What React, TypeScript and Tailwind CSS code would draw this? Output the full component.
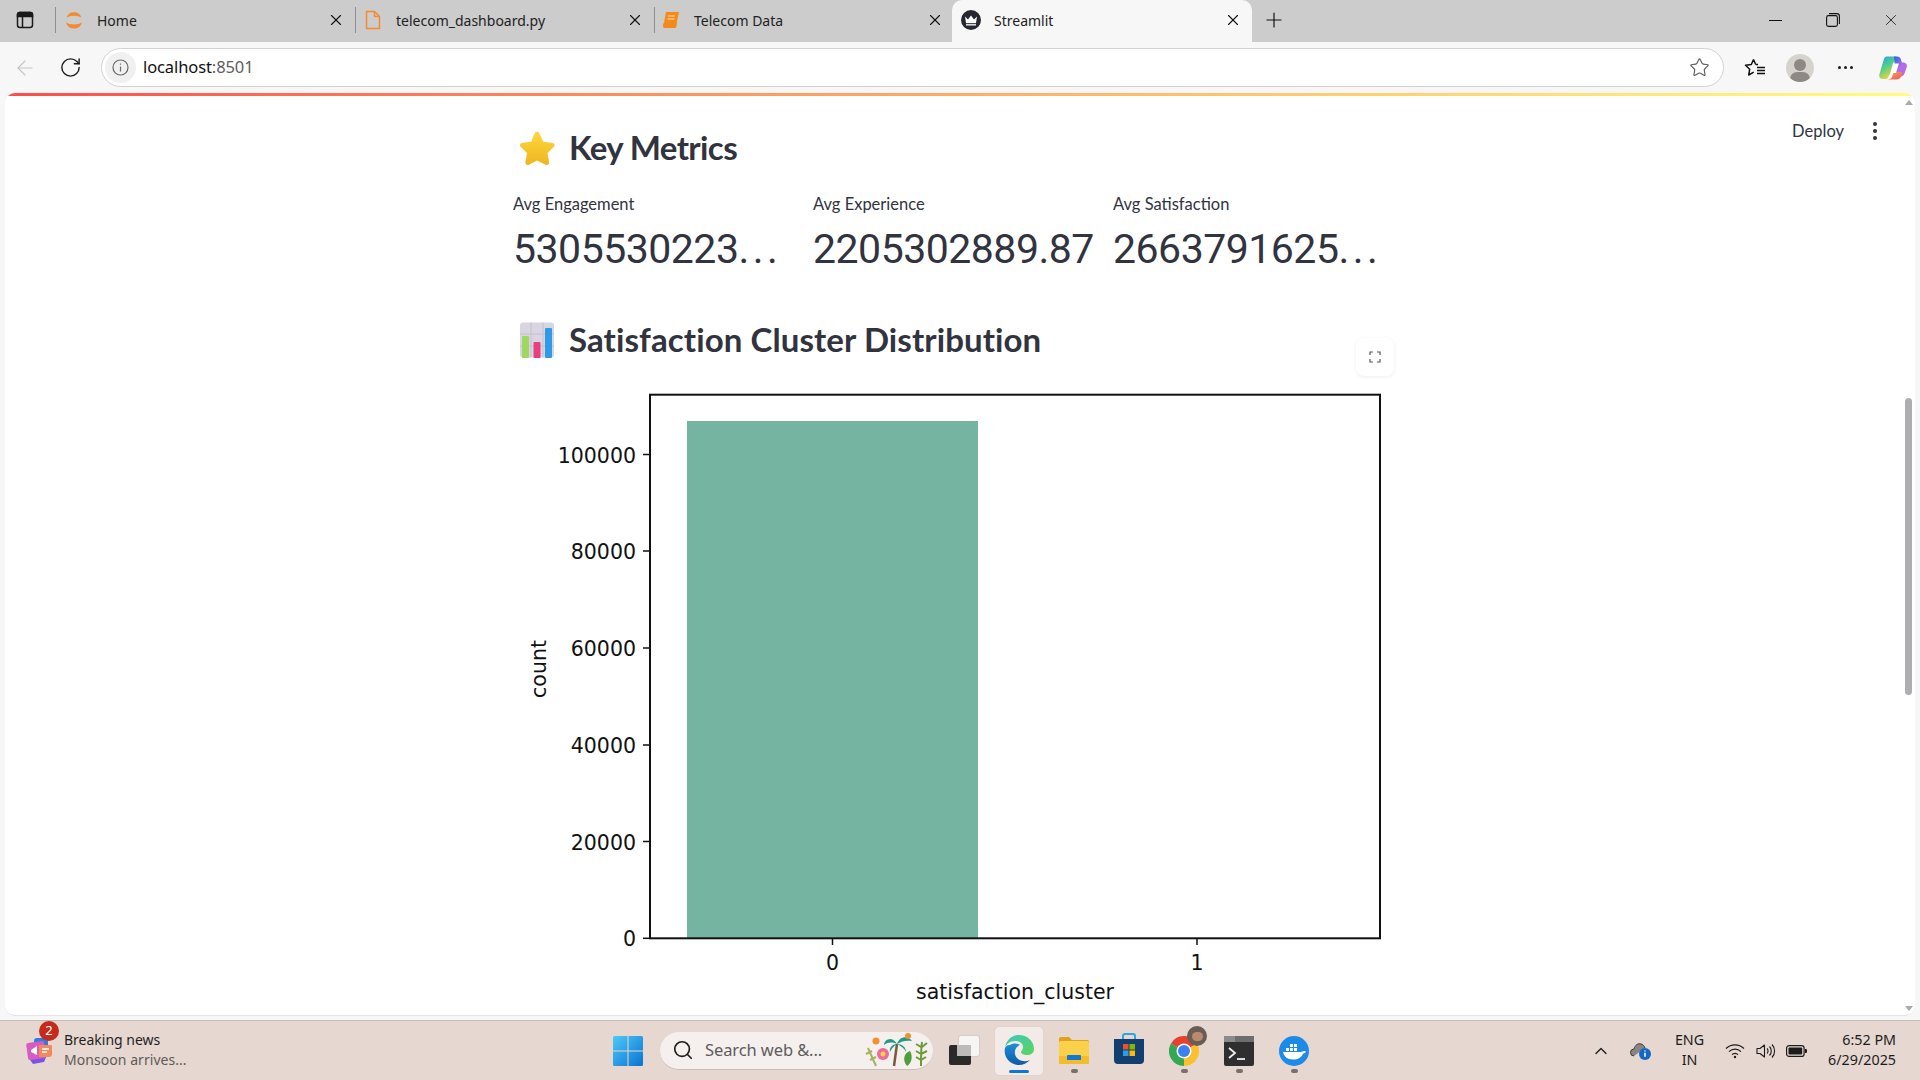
import { ArrowLeft, RotateCw, Star, Search, ChevronUp, Plus, X } from 'lucide-react';

const uiFont = "font-['Noto_Sans',sans-serif]";

const HomeIcon = () => (
    <svg width="20" height="20" viewBox="0 0 20 20" fill="none">
        <path d="M2.5 7.5 A8 8 0 0 1 17.5 7.5 A10 5 0 0 0 2.5 7.5Z" fill="#f58a2e" />
        <path d="M2 12.5 A8.3 8.3 0 0 0 18 12.5 A11 6 0 0 1 2 12.5Z" fill="#f58a2e" />
    </svg>
);

const FileIcon = () => (
    <svg width="20" height="20" viewBox="0 0 20 20" fill="none" stroke="#f58a2e" strokeWidth="1.5">
        <path d="M3.5 1.5h8l5 5v12h-13z" strokeLinejoin="round" />
        <path d="M11.5 1.5v5h5" strokeLinejoin="round" />
    </svg>
);

const BookIcon = () => (
    <svg width="20" height="20" viewBox="0 0 20 20">
        <path d="M5 2h13l-3 14H4l-2 2z" fill="#f58a1c" />
        <path d="M2 15c0-1.5 1-2.5 2.5-2.5H16L15 18H4c-1.500 0-2-1.500-2-3z" fill="#f58a1c" />
        <path d="M7 6h7M6.500 9h7" stroke="#ffd9ad" strokeWidth="1.200" />
    </svg>
);

const CrownIcon = () => (
    <svg width="20" height="20" viewBox="0 0 20 20">
        <circle cx="10" cy="10" r="10" fill="#262730" />
        <path d="M4 6.500l3 3 3-4 3 4 3-3-1 6.500H5z" fill="#fff" />
        <rect x="5" y="13.800" width="10" height="1.800" fill="#d8d8d8" />
    </svg>
);

const tabs = [
    { label: 'Home', icon: <HomeIcon />, box: 'w-[300px] pl-[8px] pr-[10px]', active: false },
    { label: 'telecom_dashboard.py', icon: <FileIcon />, box: 'w-[299px] pl-[7px] pr-[10px]', active: false },
    { label: 'Telecom Data', icon: <BookIcon />, box: 'w-[297px] pl-[6px] pr-[8px]', active: false },
    { label: 'Streamlit', icon: <CrownIcon />, box: 'w-[300px] pl-[9px] pr-[10px] bg-[#f7f7f7] rounded-t-[10px]', active: true },
];

const TabBar = () => (
    <div className="flex h-[42px] items-stretch bg-[#cccccc]">
        <div className="flex w-[50px] items-center justify-center pb-[2px]">
            <svg width="18" height="18" viewBox="0 0 18 18" fill="none" stroke="#1a1a1a" strokeWidth="1.500">
                <rect x="1.500" y="1.500" width="15" height="15" rx="2.500" />
                <path d="M1.500 3.500a2 2 0 0 1 2-2h11a2 2 0 0 1 2 2v2h-15z" fill="#1a1a1a" />
                <path d="M6.500 5.500v11" />
            </svg>
        </div>
        <div className="flex w-[6px] items-center pb-[2px]">
            <div className="ml-[5px] h-[26px] w-px bg-[#8f8f8f]" />
        </div>
        {tabs.map((tab, i) => (
            <div key={tab.label} className={`flex items-center pb-[2px] ${tab.box}`}>
                {tab.icon}
                <span className="ml-[13px] text-[14px] text-[#222222]">{tab.label}</span>
                <X className="ml-auto" size={18} strokeWidth={1.500} color="#111111" />
                {i < 2 && <div className="-mr-[10px] ml-[10px] h-[26px] w-px bg-[#8f8f8f]" />}
            </div>
        ))}
        <div className="flex w-[44px] items-center justify-center pb-[2px]">
            <Plus size={24} strokeWidth={1.200} color="#111111" />
        </div>
        <div className="ml-auto flex items-center pb-[2px]">
            <div className="flex w-[58px] justify-center">
                <div className="h-px w-[13px] bg-[#111111]" />
            </div>
            <div className="flex w-[58px] justify-center">
                <svg width="14" height="14" viewBox="0 0 14 14" fill="none" stroke="#111111" strokeWidth="1.100">
                    <rect x="0.600" y="2.600" width="10.800" height="10.800" rx="1.800" />
                    <path d="M3 0.600h8a2.400 2.400 0 0 1 2.400 2.400v8" />
                </svg>
            </div>
            <div className="flex w-[58px] justify-center">
                <X size={18} strokeWidth={1.100} color="#111111" />
            </div>
        </div>
    </div>
);

const Toolbar = () => (
    <div className="flex h-[51px] items-center bg-[#f7f7f7] pl-[5px] pr-[5px]">
        <div className="flex w-[40px] justify-center">
            <ArrowLeft size={24} strokeWidth={1.100} color="#c4c4c4" />
        </div>
        <div className="ml-[5px] flex w-[40px] justify-center">
            <RotateCw size={23} strokeWidth={1.500} color="#1c1c1c" />
        </div>
        <div className="ml-[11px] flex h-[39px] flex-1 items-center rounded-full border border-[#d2d2d2] bg-white pl-[3px] pr-[13px]">
            <div className="flex h-[31px] w-[31px] items-center justify-center rounded-full bg-[#f0f0f0]">
                <svg width="17" height="17" viewBox="0 0 17 17" fill="none" stroke="#6a6a6a" strokeWidth="1.200">
                    <circle cx="8.500" cy="8.500" r="7.500" />
                    <path d="M8.500 7.500v5M8.500 4.500v1.300" />
                </svg>
            </div>
            <span className="ml-[7px] text-[16.500px] tracking-[-0.1px] text-[#111111]">
                localhost<span className="text-[#5d5d5d]">:8501</span>
            </span>
            <Star className="ml-auto" size={21} strokeWidth={1.300} color="#5c5c5c" />
        </div>
        <div className="ml-[10px] flex w-[42px] justify-center">
            <svg width="22" height="20" viewBox="0 0 22 20" fill="none" stroke="#111111" strokeWidth="1.500">
                <path d="M9.500 1.500l2.200 5h-0M14 6.500h-2.300M9.500 1.500L7.300 6.500 1.500 7.300l4.200 3.900-1 5.800 5-2.800" strokeLinejoin="round" />
                <path d="M13 9.500h8M13 12.500h8M13 15.500h8" />
            </svg>
        </div>
        <div className="ml-[2px] flex w-[44px] justify-center">
            <div className="relative h-[28px] w-[28px] overflow-hidden rounded-full bg-[#d6d3cf]">
                <div className="absolute left-[8px] top-[5px] h-[12px] w-[12px] rounded-full bg-[#8e8984]" />
                <div className="absolute left-[4px] top-[18px] h-[14px] w-[20px] rounded-full bg-[#8e8984]" />
            </div>
        </div>
        <div className="ml-px flex w-[44px] justify-center gap-[3px]">
            <div className="h-[3px] w-[3px] rounded-full bg-[#1c1c1c]" />
            <div className="h-[3px] w-[3px] rounded-full bg-[#1c1c1c]" />
            <div className="h-[3px] w-[3px] rounded-full bg-[#1c1c1c]" />
        </div>
        <div className="ml-[4px] flex w-[44px] justify-center">
            <svg width="28" height="26" viewBox="0 0 28 26">
                <defs>
                    <linearGradient id="cpA" x1="0" y1="0" x2="0.500" y2="1">
                        <stop offset="0" stopColor="#2f9be8" />
                        <stop offset="0.500" stopColor="#4fd08a" />
                        <stop offset="1" stopColor="#f6d33c" />
                    </linearGradient>
                    <linearGradient id="cpB" x1="0.200" y1="0" x2="1" y2="1">
                        <stop offset="0" stopColor="#2a6de0" />
                        <stop offset="0.500" stopColor="#b56ee8" />
                        <stop offset="1" stopColor="#c060e0" />
                    </linearGradient>
                    <linearGradient id="cpC" x1="0" y1="0" x2="1" y2="1">
                        <stop offset="0" stopColor="#f8b13c" />
                        <stop offset="1" stopColor="#ee4f6a" />
                    </linearGradient>
                </defs>
                <path d="M8 1.500h8c1 0 2 .5 2.500 1.500L14 8 11 19 8 24H4c-3 0-4.500-2-3.500-5L4.500 5.500C5.200 3 6 1.500 8 1.500z" fill="url(#cpA)" />
                <path d="M15 1.500h3c2 0 3.500 1 4 3l.8 3h1.700c2.500 0 4 2 3.200 4.500l-2 6c-.8 2.500-2.500 3.500-4.500 3.500H14l2-9z" fill="url(#cpB)" />
                <path d="M8 24.500h9c3 0 4.500-1.500 5.500-4l1-3.500H17c-1.500 0-2.500.8-3 2.500l-1 2.500C12.500 23.500 10.500 24.500 8 24.500z" fill="url(#cpC)" />
                <path d="M15.500 8.500h4.500l-3 9.500h-5z" fill="#fff" />
            </svg>
        </div>
    </div>
);

const StarEmoji = () => (
    <svg width="38" height="36" viewBox="0 0 38 36">
        <defs>
            <linearGradient id="starFill" x1="0" y1="0" x2="0" y2="1">
                <stop offset="0" stopColor="#ffd83d" />
                <stop offset="1" stopColor="#eeb51f" />
            </linearGradient>
        </defs>
        <path
            d="M19 1.500c1 0 2 1 3 3l3.200 7.300 8.300 1c3 .4 4 2.500 2 4.500l-6 5.700 1.500 8.500c.5 3-1.500 4.300-4 3L19 30.500 11.500 34.500c-2.500 1.300-4.500 0-4-3L9 23 3 17.300c-2-2-1-4.100 2-4.500l8.300-1L16 4.500c1-2 2-3 3-3z"
            fill="url(#starFill)"
        />
    </svg>
);

const BarsEmoji = () => (
    <svg width="36" height="36" viewBox="0 0 36 36">
        <rect x="1" y="0.500" width="34" height="35" rx="3" fill="#d9d6e2" />
        <path d="M1 12h34M1 24h34M12 .5v35M24 .5v35" stroke="#c3bfd0" strokeWidth="1" />
        <rect x="3" y="14" width="7" height="22" rx="1" fill="#9ed860" />
        <rect x="14.500" y="20" width="7" height="16" rx="1" fill="#e8407e" />
        <rect x="26" y="6" width="7" height="30" rx="1" fill="#2e9bea" />
    </svg>
);

const metrics = [
    { label: 'Avg Engagement', value: '5305530223', cut: true },
    { label: 'Avg Experience', value: '2205302889.87', cut: false },
    { label: 'Avg Satisfaction', value: '2663791625', cut: true },
];

const yTicks = [
    { label: '100000', y: 454.5 },
    { label: '80000', y: 551 },
    { label: '60000', y: 648 },
    { label: '40000', y: 745 },
    { label: '20000', y: 841.500 },
    { label: '0', y: 938.300 },
];

const xTicks = [
    { label: '0', x: 832.500 },
    { label: '1', x: 1197 },
];

// seaborn countplot, coordinates are page pixels via the viewBox
const Chart = () => (
    <svg className="block" width="880" height="636" viewBox="513 380 880 636" fontFamily="'DejaVu Sans', sans-serif" fill="#111111">
        <rect x="687" y="421" width="291" height="517" fill="#75b4a0" />
        <rect x="650" y="394.700" width="730" height="543.600" fill="none" stroke="#111111" strokeWidth="2" />
        {yTicks.map((t) => (
            <g key={t.label}>
                <line x1="643" x2="650" y1={t.y} y2={t.y} stroke="#111111" strokeWidth="1.500" />
                <text x="636" y={t.y + 8} fontSize="20.500" textAnchor="end">{t.label}</text>
            </g>
        ))}
        {xTicks.map((t) => (
            <g key={t.label}>
                <line x1={t.x} x2={t.x} y1="938" y2="945" stroke="#111111" strokeWidth="1.500" />
                <text x={t.x} y="970" fontSize="20.500" textAnchor="middle">{t.label}</text>
            </g>
        ))}
        <text x="1015" y="999" fontSize="20.500" textAnchor="middle">satisfaction_cluster</text>
        <text transform="translate(546 669) rotate(-90)" fontSize="20.500" textAnchor="middle">count</text>
    </svg>
);

const Scrollbar = () => (
    <div className="absolute bottom-0 right-0 top-0 flex w-[10px] flex-col items-center pb-[4px] pt-[7px] pr-[3px]">
        <div className="h-0 w-0 border-x-[4px] border-b-[5px] border-x-transparent border-b-[#a9a9ad]" />
        <div className="mt-[293px] h-[297px] w-[7px] shrink-0 rounded-full bg-[#aeaeb2]" />
        <div className="mt-auto h-0 w-0 border-x-[4px] border-t-[5px] border-x-transparent border-t-[#a9a9ad]" />
    </div>
);

const Panel = () => (
    <div className="bg-[#f7f7f7] px-[5px] pb-[4px]">
        <div className="relative h-[923px] overflow-hidden rounded-[10px] border-b border-[#e4e4e4] bg-white font-['Lato',sans-serif] text-[#31333f]">
            <div className="h-[3px] bg-gradient-to-r from-[#ff4b4b] to-[#fffd80]" />

            <div className="absolute right-[38px] top-[26px] flex items-center">
                <span className="text-[16.500px] text-[#31333f]">Deploy</span>
                <div className="ml-[29px] flex flex-col gap-[3px]">
                    <div className="h-[4px] w-[4px] rounded-full bg-[#31333f]" />
                    <div className="h-[4px] w-[4px] rounded-full bg-[#31333f]" />
                    <div className="h-[4px] w-[4px] rounded-full bg-[#31333f]" />
                </div>
            </div>
            <Scrollbar />

            <div className="ml-[508px] w-[882px] pt-[32px]">
                <div className="flex h-[40px] items-center pl-[5px]">
                    <StarEmoji />
                    <h3 className="ml-[13px] text-[33px] font-bold tracking-[-0.6px]">Key Metrics</h3>
                </div>

                <div className="mt-[24px] grid grid-cols-[300px_300px_284px]">
                    {metrics.map((m) => (
                        <div key={m.label}>
                            <div className="flex h-[24px] items-center text-[16.500px]">{m.label}</div>
                            <div className="mt-[5px] h-[56px] font-['Roboto',sans-serif] text-[41px] leading-[56px] tracking-[-0.5px]">
                                {m.value}
                                {m.cut && <span className="tracking-[3.500px]">...</span>}
                            </div>
                        </div>
                    ))}
                </div>

                <div className="relative mt-[43px] flex h-[40px] items-center pl-[6px]">
                    <BarsEmoji />
                    <h3 className="ml-[14px] text-[33px] font-bold tracking-[0.1px]">Satisfaction Cluster Distribution</h3>
                    <div className="absolute right-[1px] top-[18px] flex h-[38px] w-[38px] items-center justify-center rounded-[8px] bg-white shadow-[0_1px_4px_rgba(0,0,0,0.07)]">
                        <svg width="12" height="12" viewBox="0 0 12 12" fill="none" stroke="#55565f" strokeWidth="1.200">
                            <path d="M1 4V1h3M8 1h3v3M11 8v3H8M4 11H1V8" />
                        </svg>
                    </div>
                </div>

                <div className="mt-[20px]">
                    <Chart />
                </div>
            </div>
        </div>
    </div>
);

const TaskDot = ({ active }: { active?: boolean }) => (
    <div className={active ? 'absolute bottom-[2px] h-[3px] w-[20px] rounded-full bg-[#0a78d4]' : 'absolute bottom-[2px] h-[4px] w-[7px] rounded-full bg-[#77706d]'} />
);

const EdgeIcon = () => (
    <svg width="30" height="30" viewBox="0 0 30 30">
        <defs>
            <linearGradient id="edgeA" x1="0" y1="0" x2="1" y2="1">
                <stop offset="0" stopColor="#3bc9c0" />
                <stop offset="1" stopColor="#5ed45a" />
            </linearGradient>
            <linearGradient id="edgeB" x1="0" y1="0" x2="0" y2="1">
                <stop offset="0" stopColor="#1f8ed8" />
                <stop offset="1" stopColor="#0c5ba8" />
            </linearGradient>
        </defs>
        <path d="M1 13C2 5 8 0 15 0c8 0 15 6 15 14 0 4-3 6-7 6-3 0-6-1-6-3 0-1 2-2 2-5 0-4-4-6-8-6-5 0-9 3-10 7z" fill="url(#edgeA)" />
        <path d="M1 13c-2 9 5 17 14 17 4 0 8-2 11-5-7 3-14 0-15-6-1-4 2-8 5-9-3-2-7-2-10 0-3 0-4 1-5 3z" fill="url(#edgeB)" />
    </svg>
);

const FolderIcon = () => (
    <svg width="30" height="28" viewBox="0 0 30 28">
        <path d="M0 3a2 2 0 0 1 2-2h8l3 3h15a2 2 0 0 1 2 2v4H0z" fill="#e0a11c" />
        <rect x="0" y="5" width="30" height="23" rx="2" fill="#fbd04a" />
        <rect x="0" y="20" width="30" height="8" rx="1" fill="#f4bb2c" />
        <path d="M9 19h12a1 1 0 0 1 1 1v4H8v-4a1 1 0 0 1 1-1z" fill="#0f78d4" />
    </svg>
);

const StoreIcon = () => (
    <svg width="30" height="32" viewBox="0 0 30 32">
        <path d="M9 7V3a2 2 0 0 1 2-2h8a2 2 0 0 1 2 2v4" fill="none" stroke="#2aa5e6" strokeWidth="2" />
        <path d="M0 6h30v21a4 4 0 0 1-4 4H4a4 4 0 0 1-4-4z" fill="#123f70" />
        <rect x="9" y="11" width="5.500" height="5.500" fill="#f25022" />
        <rect x="15.500" y="11" width="5.500" height="5.500" fill="#7fba00" />
        <rect x="9" y="17.500" width="5.500" height="5.500" fill="#2a9fe6" />
        <rect x="15.500" y="17.500" width="5.500" height="5.500" fill="#ffb900" />
    </svg>
);

const ChromeIcon = () => (
    <div className="relative h-[30px] w-[30px]">
        <svg width="30" height="30" viewBox="0 0 30 30">
            <path d="M15 15L2 7.500A15 15 0 0 1 28 7.500z" fill="#e6412f" />
            <path d="M15 15L2 7.500A15 15 0 0 0 15 30z" fill="#34a853" />
            <path d="M15 15L28 7.500A15 15 0 0 1 15 30z" fill="#fbc02d" />
            <circle cx="15" cy="15" r="7.500" fill="#fff" />
            <circle cx="15" cy="15" r="6" fill="#3b82f0" />
        </svg>
        <div className="absolute right-[-8px] top-[-10px] h-[20px] w-[20px] overflow-hidden rounded-full bg-[#6a5d55]">
            <div className="mx-auto mt-[6px] h-[9px] w-[11px] rounded-full bg-[#b98a6e]" />
        </div>
    </div>
);

const TerminalIcon = () => (
    <svg width="30" height="30" viewBox="0 0 30 30">
        <rect width="30" height="30" rx="2" fill="#2f2f2f" />
        <rect width="30" height="6" fill="#6e6e6e" />
        <rect width="11" height="6" fill="#8c8c8c" />
        <path d="M5 12l6 5-6 5" fill="none" stroke="#f0f0f0" strokeWidth="1.800" />
        <path d="M13 23h8" stroke="#f0f0f0" strokeWidth="1.800" />
    </svg>
);

const DockerIcon = () => (
    <svg width="30" height="30" viewBox="0 0 30 30">
        <circle cx="15" cy="15" r="15" fill="#1d8ae8" />
        <g fill="#fff">
            <rect x="7" y="12" width="3" height="3" />
            <rect x="11" y="12" width="3" height="3" />
            <rect x="15" y="12" width="3" height="3" />
            <rect x="11" y="8" width="3" height="3" />
            <rect x="15" y="8" width="3" height="3" />
            <path d="M4 16h18c1 0 2-1 3-1 .5 0 1.500 0 2 .5-.5 1.500-2 2-3 2-1.500 4-5 6-10 6-6 0-9-3-10-7.500z" />
        </g>
    </svg>
);

const Taskbar = () => (
    <div className={`flex h-[60px] items-center border-t border-[#c9bab4] bg-[#e6d7d1] ${uiFont}`}>
        <div className="relative flex w-[613px] items-center pl-[25px]">
            <svg width="28" height="26" viewBox="0 0 28 26">
                <rect x="9" y="0" width="14" height="14" rx="3" fill="#2f7de0" />
                <path d="M3 19l19-2-3 7-11 2z" fill="#7a52e6" />
                <rect x="2" y="4" width="18" height="17" rx="2" transform="rotate(-8 11 12)" fill="#d65cc0" />
                <path d="M14 7h12a1 1 0 0 1 1 1v8a3 3 0 0 1-3 3H14z" fill="#f48a5a" />
                <path d="M6 12l6-4v9l-6-3z" fill="#fff" />
                <path d="M17 11h7M17 14h5" stroke="#fff" strokeWidth="1.500" />
            </svg>
            <div className="absolute left-[39px] top-[-11px] flex h-[20px] w-[20px] items-center justify-center rounded-full bg-[#c42b1c] text-[13px] text-white">2</div>
            <div className="ml-[11px] -mt-[2px] text-[14px] leading-[20px]">
                <div className="text-[#1f1f1f]">Breaking news</div>
                <div className="tracking-[0.05px] text-[#5f5a58]">Monsoon arrives...</div>
            </div>
        </div>

        <svg width="30" height="30" viewBox="0 0 30 30">
            <defs>
                <linearGradient id="winA" x1="0" y1="0" x2="1" y2="1">
                    <stop offset="0" stopColor="#4fc8f8" />
                    <stop offset="1" stopColor="#0a73d0" />
                </linearGradient>
            </defs>
            <path d="M0 1.500A1.500 1.500 0 0 1 1.500 0h13v14.500H0zM15.500 0H28.500A1.500 1.500 0 0 1 30 1.500v13H15.500zM0 15.500h14.500V30H1.500A1.500 1.500 0 0 1 0 28.500zM15.500 15.500H30v13a1.500 1.500 0 0 1-1.500 1.500h-13z" fill="url(#winA)" />
        </svg>

        <div className="ml-[17px] flex h-[38px] w-[273px] items-center rounded-full border-b border-[#cbbcb6] bg-[#f5f0ee] pl-[12px]">
            <Search size={22} strokeWidth={1.800} color="#1c1c1c" />
            <span className="ml-[11px] text-[16.500px] tracking-[-0.1px] text-[#5c5c5c]">Search web &amp;...</span>
            <svg className="ml-auto mr-[3px]" width="66" height="36" viewBox="0 0 66 36">
                <path d="M4 16l8 18M2 22l6-3M6 28l6-3" stroke="#a8b060" strokeWidth="2" />
                <circle cx="12" cy="9" r="3.500" fill="#f09030" />
                <circle cx="19" cy="22" r="6" fill="#ef6a9a" />
                <circle cx="19" cy="22" r="2.500" fill="#f6d34a" />
                <path d="M30 34L33 12" stroke="#7a5a3c" strokeWidth="2.500" />
                <path d="M33 12C28 3 20 8 20 13c4-3 8-3 13-1zM33 12c3-9 12-8 15-3-6-1-10 0-15 3zM33 12c-4 0-8 3-7 8 2-4 4-6 7-8zM33 12c5 0 9 3 9 8-2-4-5-6-9-8z" fill="#1f9a8a" />
                <circle cx="44" cy="4" r="3" fill="#f09030" />
                <path d="M43 34c-5-6-3-13 3-15 3 5 2 12-3 15z" fill="#4f9e3c" />
                <path d="M57 34c0-10 0-18 1-24M57 15l-5-3M58 15l5-4M57 22l-5-3M57 22l6-3M57 28l-5-3M57 28l5-3" stroke="#6e9a38" strokeWidth="2" fill="none" />
            </svg>
        </div>

        <div className="ml-[7px] flex items-center gap-[7px]">
            <div className="flex h-[48px] w-[48px] items-center justify-center">
                <div className="relative h-[29px] w-[30px]">
                    <div className="absolute right-0 top-0 h-[20px] w-[20px] rounded-[2px] bg-[#f7f5f4] shadow-[0_0_2px_rgba(0,0,0,0.2)]" />
                    <div className="absolute bottom-0 left-0 h-[20px] w-[22px] rounded-[2px] bg-[#2a2a2a]" />
                    <div className="absolute left-[8px] top-[9px] h-[11px] w-[14px] bg-[#bdbab8]" />
                </div>
            </div>
            <div className="relative flex h-[48px] w-[48px] justify-center rounded-[4px] bg-[#f2ebe7] pt-[8px] shadow-[0_0_1px_rgba(0,0,0,0.2)]">
                <EdgeIcon />
                <TaskDot active />
            </div>
            <div className="relative flex h-[48px] w-[48px] justify-center pt-[9px]">
                <FolderIcon />
                <TaskDot />
            </div>
            <div className="relative flex h-[48px] w-[48px] justify-center pt-[6px]">
                <StoreIcon />
            </div>
            <div className="relative flex h-[48px] w-[48px] justify-center pt-[9px]">
                <ChromeIcon />
                <TaskDot />
            </div>
            <div className="relative flex h-[48px] w-[48px] justify-center pt-[9px]">
                <TerminalIcon />
                <TaskDot />
            </div>
            <div className="relative flex h-[48px] w-[48px] justify-center pt-[9px]">
                <DockerIcon />
                <TaskDot />
            </div>
        </div>

        <div className="ml-auto flex w-[340px] items-center pr-[24px] text-[14.300px] text-[#1c1c1c]">
            <div className="flex w-[42px] justify-center">
                <ChevronUp size={20} strokeWidth={1.600} color="#1c1c1c" />
            </div>
            <div className="flex w-[38px] justify-center">
                <svg width="22" height="18" viewBox="0 0 22 18">
                    <path d="M4 14a3.500 3.500 0 0 1 0-7c1-4 4-6 7-5 2 .5 3.500 2 4 4" fill="#8a8583" stroke="#3a3a3a" strokeWidth="1" />
                    <circle cx="15" cy="12" r="6" fill="#1468c4" />
                    <path d="M15 10.800v4M15 8.500v1" stroke="#fff" strokeWidth="1.500" />
                </svg>
            </div>
            <div className="-mt-[2px] w-[59px] text-center leading-[20px]">
                <div>ENG</div>
                <div>IN</div>
            </div>
            <div className="flex w-[32px] justify-center">
                <svg width="20" height="16" viewBox="0 0 20 16" fill="none" stroke="#1c1c1c" strokeWidth="1.200">
                    <path d="M1 5.500a13 13 0 0 1 18 0M4 8.700a8.500 8.500 0 0 1 12 0M7 11.700a4 4 0 0 1 6 0" />
                    <circle cx="10" cy="14" r="1.200" fill="#1c1c1c" stroke="none" />
                </svg>
            </div>
            <div className="flex w-[30px] justify-center">
                <svg width="20" height="16" viewBox="0 0 20 16" fill="none" stroke="#1c1c1c" strokeWidth="1.100">
                    <path d="M1 5.500h3L8.500 2v12L4 10.500H1z" strokeLinejoin="round" />
                    <path d="M11 5.500a3.500 3.500 0 0 1 0 5M13.500 3.500a6.500 6.500 0 0 1 0 9M16 1.500a9.500 9.500 0 0 1 0 13" />
                </svg>
            </div>
            <div className="flex w-[30px] justify-center">
                <svg width="21" height="12" viewBox="0 0 21 12">
                    <rect x="0.600" y="0.600" width="17.500" height="10.800" rx="2.500" fill="none" stroke="#1c1c1c" strokeWidth="1.200" />
                    <rect x="2.500" y="2.500" width="13.700" height="7" rx="1" fill="#1c1c1c" />
                    <path d="M19 4h1a1 1 0 0 1 1 1v2a1 1 0 0 1-1 1h-1z" fill="#1c1c1c" />
                </svg>
            </div>
            <div className="-mt-[2px] flex-1 text-right leading-[20px]">
                <div>6:52 PM</div>
                <div>6/29/2025</div>
            </div>
        </div>
    </div>
);

export default function App() {
    return (
        <div className={`flex h-screen w-full flex-col overflow-hidden ${uiFont}`}>
            <TabBar />
            <Toolbar />
            <Panel />
            <Taskbar />
        </div>
    );
}
